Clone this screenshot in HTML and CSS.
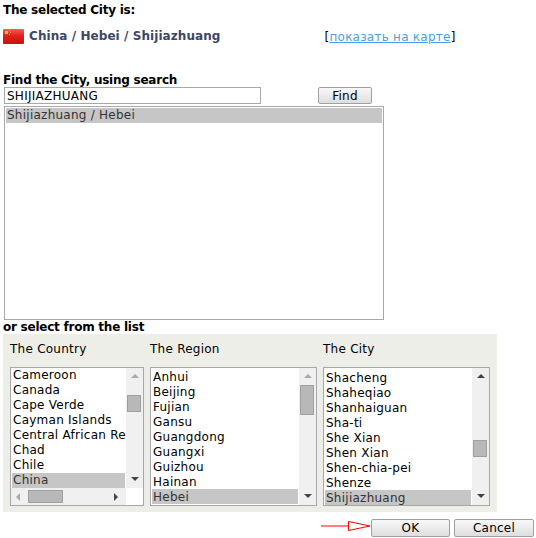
FILE: index.html
```html
<!DOCTYPE html>
<html lang="en">
<head>
  <meta charset="UTF-8">
  <title>Select City</title>
  <link rel="stylesheet" href="styles.css">
</head>
<body>
  <div class="page">
    <div class="heading">The selected City is:</div>

    <div class="current">
      <svg class="flag" width="21" height="15" viewBox="0 0 21 15">
        <defs>
          <linearGradient id="flag-red" x1="0" y1="0" x2="0" y2="1">
            <stop offset="0" stop-color="#f2604e"/>
            <stop offset="0.45" stop-color="#e4201c"/>
            <stop offset="1" stop-color="#c8100f"/>
          </linearGradient>
        </defs>
        <rect width="21" height="15" rx="1" fill="url(#flag-red)"/>
        <rect x="2" y="2" width="3" height="3" fill="#f3b84a"/>
        <rect x="6" y="1" width="1" height="1" fill="#f0a050"/>
        <rect x="7" y="3" width="1" height="1" fill="#f0a050"/>
        <rect x="6" y="5" width="1" height="1" fill="#f0a050"/>
      </svg>
      <span class="current-name">China / Hebei / Shijiazhuang</span>
      <span class="map-link">[<a href="#">показать на карте</a>]</span>
    </div>

    <div class="heading find-title">Find the City, using search</div>
    <div class="search-row">
      <input class="search-input" type="text" value="SHIJIAZHUANG">
      <button class="btn btn-find" type="button">Find</button>
    </div>

    <div class="results">
      <div class="item selected">Shijiazhuang / Hebei</div>
    </div>

    <div class="heading or-title">or select from the list</div>

    <div class="panel">
      <div class="col col-country">
        <div class="col-title">The Country</div>
        <div class="listbox">
          <div class="list-main">
            <div class="items">
              <div class="item">Cameroon</div>
              <div class="item">Canada</div>
              <div class="item">Cape Verde</div>
              <div class="item">Cayman Islands</div>
              <div class="item">Central African Re</div>
              <div class="item">Chad</div>
              <div class="item">Chile</div>
              <div class="item selected">China</div>
            </div>
            <div class="vbar">
              <span class="arrow up faded"></span>
              <div class="vtrack track-country"><div class="thumb"></div></div>
              <span class="arrow down"></span>
            </div>
          </div>
          <div class="hbar">
            <span class="arrow left faded"></span>
            <div class="hthumb"></div>
            <span class="arrow right"></span>
          </div>
        </div>
      </div>

      <div class="col col-region">
        <div class="col-title">The Region</div>
        <div class="listbox">
          <div class="list-main">
            <div class="items">
              <div class="item">Anhui</div>
              <div class="item">Beijing</div>
              <div class="item">Fujian</div>
              <div class="item">Gansu</div>
              <div class="item">Guangdong</div>
              <div class="item">Guangxi</div>
              <div class="item">Guizhou</div>
              <div class="item">Hainan</div>
              <div class="item selected">Hebei</div>
            </div>
            <div class="vbar">
              <span class="arrow up faded"></span>
              <div class="vtrack track-region"><div class="thumb"></div></div>
              <span class="arrow down"></span>
            </div>
          </div>
        </div>
      </div>

      <div class="col col-city">
        <div class="col-title">The City</div>
        <div class="listbox">
          <div class="list-main">
            <div class="items">
              <div class="item">Shacheng</div>
              <div class="item">Shaheqiao</div>
              <div class="item">Shanhaiguan</div>
              <div class="item">Sha-ti</div>
              <div class="item">She Xian</div>
              <div class="item">Shen Xian</div>
              <div class="item">Shen-chia-pei</div>
              <div class="item">Shenze</div>
              <div class="item selected">Shijiazhuang</div>
            </div>
            <div class="vbar">
              <span class="arrow up"></span>
              <div class="vtrack track-city"><div class="thumb"></div></div>
              <span class="arrow down"></span>
            </div>
          </div>
        </div>
      </div>
    </div>

    <div class="actions">
      <svg class="pointer" width="50" height="12" viewBox="0 0 50 12">
        <path d="M0 6H27" stroke="#f00" fill="none"/>
        <path d="M27.5 1.5V10.5L49 6Z" stroke="#f00" fill="#fff"/>
      </svg>
      <button class="btn btn-ok" type="button">OK</button>
      <button class="btn btn-cancel" type="button">Cancel</button>
    </div>
  </div>
</body>
</html>
```

FILE: styles.css
```css
html, body {
  margin: 0;
  padding: 0;
  background-color: #fff;
  font-family: 'DejaVu Sans', Verdana, sans-serif;
  font-size: 12px;
  letter-spacing: 0.25px;
  color: #000;
}

.page {
  width: 536px;
  height: 538px;
  padding: 3px 0 0 3px;
  box-sizing: border-box;
  overflow: hidden;
}

.heading {
  font-weight: bold;
  line-height: 14px;
  letter-spacing: -0.24px;
}

.current {
  display: flex;
  align-items: flex-start;
  margin-top: 12px;
  height: 44px;
}

.flag {
  flex: none;
}

.current-name {
  margin-left: 5px;
  font-weight: bold;
  color: #3c4768;
  line-height: 14px;
  letter-spacing: 0.07px;
}

.map-link {
  margin-left: 104px;
  margin-top: 1px;
  line-height: 14px;
}

.map-link a {
  color: #4a9fe6;
}

.search-row {
  display: flex;
  align-items: flex-start;
  margin-left: 1px;
}

.search-input {
  width: 257px;
  height: 17px;
  box-sizing: border-box;
  margin: 0;
  padding: 0 2px;
  border: 1px solid #a8a8a8;
  border-radius: 0;
  font-family: inherit;
  font-size: 12px;
  letter-spacing: inherit;
  color: #000;
  outline: none;
}

.btn {
  display: block;
  box-sizing: border-box;
  margin: 0;
  padding: 0;
  height: 17px;
  border: 1px solid #a0a0a0;
  border-radius: 2px;
  background: linear-gradient(#f8f8f8, #dedede);
  font-family: inherit;
  font-size: 12px;
  letter-spacing: inherit;
  line-height: 14px;
  color: #000;
}

.btn-find {
  width: 54px;
  margin-left: 57px;
}

.results {
  width: 380px;
  height: 214px;
  box-sizing: border-box;
  margin: 2px 0 0 1px;
  padding: 1px;
  border: 1px solid #a8a8a8;
}

.item {
  height: 15px;
  line-height: 15px;
  padding-left: 1px;
  white-space: nowrap;
}

.col-region .item,
.col-city .item {
  line-height: 17px;
}

.item.selected {
  background-color: #c6c6c6;
  color: #333;
}

.or-title {
  height: 14px;
}

.panel {
  display: flex;
  width: 494px;
  height: 178px;
  box-sizing: border-box;
  padding: 0 7px;
  background-color: #eeeee8;
}

.col-title {
  height: 33px;
  padding-top: 8px;
  box-sizing: border-box;
  line-height: 14px;
}

.col-country {
  width: 134px;
}

.col-region {
  width: 167px;
  margin-left: 6px;
}

.col-city {
  width: 167px;
  margin-left: 6px;
}

.listbox {
  height: 139px;
  box-sizing: border-box;
  border: 1px solid #a8a8a8;
  background-color: #fff;
}

.list-main {
  display: flex;
}

.col-country .list-main {
  height: 120px;
}

.col-region .list-main,
.col-city .list-main {
  height: 137px;
}

.items {
  flex: 1;
  min-width: 0;
  padding: 0 1px;
}

.col-region .items {
  padding-top: 1px;
}

.col-city .items {
  padding-top: 2px;
}

.vbar {
  flex: none;
  width: 17px;
  display: flex;
  flex-direction: column;
  align-items: center;
  background-color: #f0f0f0;
}

.vtrack {
  flex: 1;
  width: 100%;
  padding: 0 2px 0 1px;
  box-sizing: border-box;
}

.track-country { padding-top: 12px; }
.track-region { padding-top: 2px; }
.track-city { padding-top: 57px; }

.thumb {
  box-sizing: border-box;
  border: 1px solid #a0a0a0;
  background-color: #b8b8b8;
}

.track-country .thumb { height: 17px; }
.track-region .thumb { height: 30px; }
.track-city .thumb { height: 17px; }

.arrow {
  flex: none;
  display: block;
  width: 0;
  height: 0;
  border-style: solid;
  border-color: transparent;
}

.arrow.up {
  margin: 6px 0 5px;
  border-width: 0 4px 4px;
  border-bottom-color: #444;
}

.arrow.down {
  margin: 5px 0 7px;
  border-width: 4px 4px 0;
  border-top-color: #444;
}

.arrow.left {
  margin: 0 8px 0 5px;
  border-width: 4px 4px 4px 0;
  border-right-color: #444;
}

.arrow.right {
  margin: 0 0 0 51px;
  border-width: 4px 0 4px 4px;
  border-left-color: #444;
}

.arrow.up.faded { border-bottom-color: #aaa; }
.arrow.left.faded { border-right-color: #aaa; }

.hbar {
  display: flex;
  align-items: center;
  width: 115px;
  height: 17px;
  background-color: #f0f0f0;
}

.hthumb {
  width: 35px;
  height: 13px;
  box-sizing: border-box;
  border: 1px solid #a0a0a0;
  background-color: #b8b8b8;
}

.actions {
  display: flex;
  align-items: flex-start;
  margin-top: 7px;
  margin-left: 318px;
}

.pointer {
  flex: none;
  margin-top: 1px;
}

.btn-ok {
  width: 79px;
  height: 18px;
}

.btn-cancel {
  width: 80px;
  height: 18px;
  margin-left: 4px;
}
```
